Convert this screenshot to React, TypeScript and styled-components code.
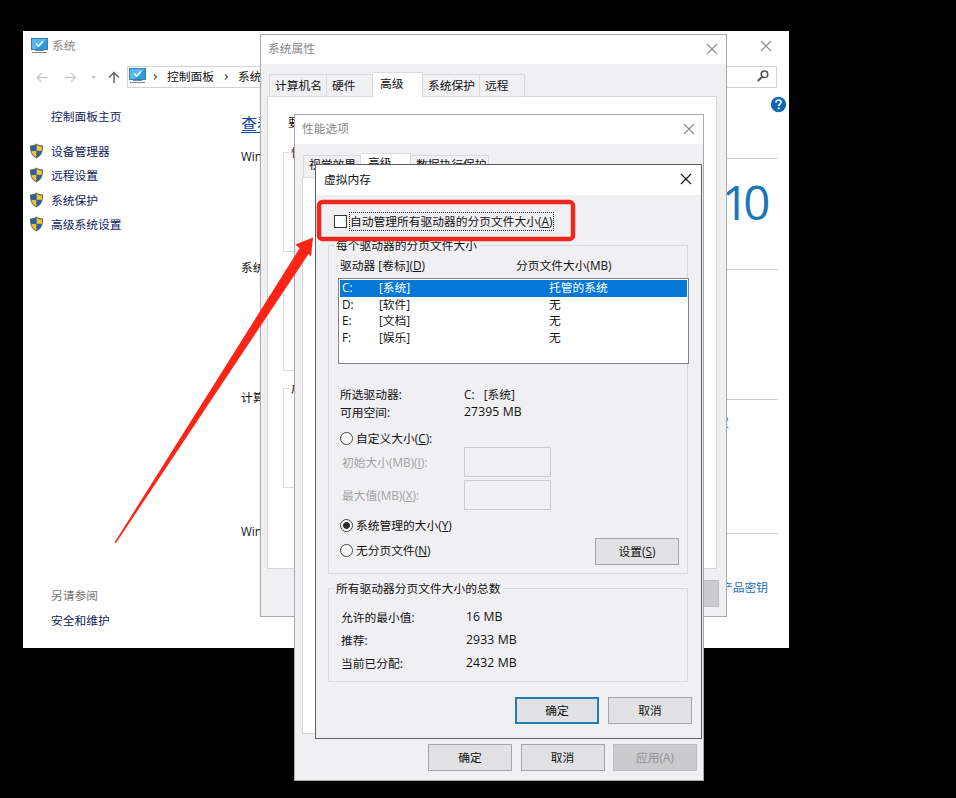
import React from "react";
import styled, { createGlobalStyle, css } from "styled-components";

const GlobalStyle = createGlobalStyle`
  *, *::before, *::after { box-sizing: border-box; }
  body {
    margin: 0;
    background: #000;
    overflow: hidden;
    font-family: "Open Sans", "Noto Sans CJK SC", sans-serif;
    font-size: 11.75px;
    line-height: 16px;
    color: #111;
  }
`;

const Desktop = styled.div`
  position: relative;
  width: 956px;
  height: 798px;
  background: #000;
  overflow: hidden;
  white-space: nowrap;
`;

/* ---------- windows ---------- */

const Window = styled.section<{ $x: number; $y: number; $w: number; $h: number; $border: string; $bg?: string }>`
  position: absolute;
  left: ${(p) => p.$x}px;
  top: ${(p) => p.$y}px;
  width: ${(p) => p.$w}px;
  height: ${(p) => p.$h}px;
  border: 1px solid ${(p) => p.$border};
  background: ${(p) => p.$bg ?? "#f0eff1"};
  display: flex;
  flex-direction: column;
  overflow: hidden;
`;

const TitleBar = styled.header<{ $h: number; $active?: boolean; $end?: number }>`
  flex: none;
  height: ${(p) => p.$h}px;
  padding: 0 ${(p) => p.$end ?? 8}px 2px 7px;
  display: flex;
  align-items: center;
  gap: 4px;
  background: #fff;
  color: ${(p) => (p.$active ? "#111" : "#868686")};
`;

const Title = styled.span<{ $low?: boolean }>`
  flex: 1;
  padding: 0 0 ${(p) => (p.$low ? 0 : 2)}px ${(p) => (p.$low ? 1 : 0)}px;
`;

const CloseIcon = ({ color = "#8a8a8a" }: { color?: string }) => (
  <svg width="12" height="12" viewBox="0 0 12 12" fill="none" stroke={color} strokeWidth="1.1">
    <path d="M1 1l10 10M11 1L1 11" />
  </svg>
);

const MonitorIcon = () => (
  <svg width="17" height="16" viewBox="0 0 17 16">
    <rect x="0.5" y="0.5" width="16" height="11" fill="#2c9be0" stroke="#3b7ea6" />
    <path d="M1 1h15L5 11H1z" fill="#55b8f0" />
    <path d="M5.200 5.600l2.500 2.600 4.400-5" fill="none" stroke="#fff" strokeWidth="1.500" />
    <path d="M4 12.500h9M1 14.500h15" stroke="#6d8797" />
  </svg>
);

const Shield = styled.svg`
  display: block;
`;

const ShieldIcon = () => (
  <Shield width="15" height="16" viewBox="0 0 15 16">
    <path d="M7.500.6C5.600 2 3.300 2.500.9 2.500c0 6 1 10 6.600 12.900 5.600-2.900 6.600-6.900 6.600-12.900-2.400 0-4.700-.5-6.600-1.900z" fill="#6d6a55" />
    <path d="M7.300 2.100C5.600 3.200 3.900 3.600 2 3.700c0 1.500.1 2.800.3 4h5z" fill="#1f62b4" />
    <path d="M7.700 2.100C9.400 3.200 11.100 3.600 13 3.700c0 1.500-.1 2.800-.3 4h-5z" fill="#f3c63e" />
    <path d="M7.300 8.100H2.400c.6 2.900 2 4.700 4.900 6.200z" fill="#f0bd35" />
    <path d="M7.700 8.100h4.900c-.6 2.900-2 4.700-4.900 6.200z" fill="#1f62b4" />
  </Shield>
);

/* ---------- system window ---------- */

const NavBar = styled.nav`
  flex: none;
  height: 22px;
  margin-top: 5px;
  padding: 0 11px 0 12px;
  display: flex;
  align-items: center;
`;

const NavGlyphs = styled.div`
  width: 91px;
  height: 22px;
  flex: none;
`;

const AddressBar = styled.div`
  flex: 1;
  height: 22px;
  border: 1px solid #d3d3d3;
  padding: 0 7px 2px 1px;
  display: flex;
  align-items: center;
`;

const Crumb = styled.span<{ $gap: number }>`
  margin-left: ${(p) => p.$gap}px;
`;

const Chevron = styled.svg<{ $gap: number }>`
  margin: 2px 0 0 ${(p) => p.$gap}px;
`;

const Search = styled.svg`
  margin-left: auto;
`;

const Columns = styled.div`
  flex: 1;
  display: flex;
`;

const Sidebar = styled.aside`
  width: 217px;
  padding: 20px 0 19px 5px;
  display: flex;
  flex-direction: column;
`;

const SideLink = styled.div<{ $gap?: number; $muted?: boolean }>`
  height: 16px;
  margin-top: ${(p) => p.$gap ?? 0}px;
  display: grid;
  grid-template-columns: 22px auto;
  align-items: center;
  color: ${(p) => (p.$muted ? "#777" : "#131b5c")};
  span { grid-column: 2; }
`;

const Spacer = styled.div`
  flex: 1;
`;

const Content = styled.main`
  flex: 1;
  padding: 8px 10px 0 0;
  display: flex;
  flex-direction: column;
`;

const HelpRow = styled.div`
  height: 17px;
  display: flex;
  justify-content: flex-end;
  margin-right: -9px;
`;

const Headline = styled.h1`
  margin: 0 0 13px;
  height: 22px;
  font-size: 16px;
  line-height: 22px;
  font-weight: 400;
  color: #1245a8;
  text-decoration: underline;
  text-underline-offset: 2px;
`;

const InfoSection = styled.section<{ $h: number }>`
  height: ${(p) => p.$h}px;
`;

const InfoHead = styled.h2`
  margin: 0;
  font: inherit;
  display: flex;
  align-items: center;
  gap: 8px;
  &::after {
    content: "";
    flex: 1;
    height: 1px;
    margin-top: 5px;
    background: #cdcdcd;
  }
`;

const VersionMark = styled.div`
  padding-top: 13px;
  padding-right: 13px;
  text-align: right;
  font-family: "Open Sans", sans-serif;
  font-size: 47.500px;
  line-height: 50px;
  letter-spacing: -5.500px;
  color: #1b77ba;
`;

const InfoLink = styled.div<{ $top: number; $right: number }>`
  padding-top: ${(p) => p.$top}px;
  padding-right: ${(p) => p.$right}px;
  text-align: right;
  color: #1a6db8;
`;

/* ---------- dialog parts ---------- */

const Tabs = styled.div<{ $top: number; $left: number }>`
  flex: none;
  height: 25px;
  margin: ${(p) => p.$top}px 0 -1px ${(p) => p.$left}px;
  display: flex;
  align-items: flex-end;
  position: relative;
`;

const Tab = styled.div<{ $w: number; $on?: boolean; $raised?: boolean }>`
  width: ${(p) => p.$w}px;
  height: 23px;
  padding: ${(p) => (p.$raised ? 0 : 2)}px 0 0 5px;
  border: 1px solid #dadadc;
  border-left-width: 0;
  &:first-child { border-left-width: 1px; }
  ${(p) =>
    p.$on &&
    css`
      height: 25px;
      padding-left: 7px;
      background: #fff;
      border-bottom-color: #fff;
    `}
`;

const Panel = styled.div<{ $h: number; $l: number; $r: number }>`
  flex: none;
  height: ${(p) => p.$h}px;
  margin: 0 ${(p) => p.$r}px 0 ${(p) => p.$l}px;
  border: 1px solid #d6d6d8;
  background: #fff;
  padding: 17px 15px 0;
`;

const Group = styled.fieldset<{ $h: number; $mt?: number }>`
  margin: ${(p) => p.$mt ?? 0}px 0 0;
  padding: 0;
  min-width: 0;
  height: ${(p) => p.$h}px;
  border: 1px solid #dadada;
`;

const Legend = styled.legend`
  margin-left: 5px;
  padding: 0 2px;
  height: 16px;
`;

const Note = styled.p`
  margin: 0 0 5px 5px;
`;

const Buttons = styled.div<{ $top: number; $right: number; $gap?: number }>`
  display: flex;
  justify-content: flex-end;
  gap: ${(p) => p.$gap ?? 9}px;
  margin: ${(p) => p.$top}px ${(p) => p.$right}px 0 0;
`;

const Button = styled.button<{ $primary?: boolean }>`
  width: 84px;
  height: 27px;
  padding: 0 0 1px;
  border: ${(p) => (p.$primary ? "2px solid #1c7fb5" : "1px solid #a6a6a8")};
  background: #e2e1e3;
  color: #111;
  font: inherit;
  &:disabled {
    background: #cbcacc;
    border-color: #bdbdbf;
    color: #929294;
  }
`;

/* ---------- virtual memory dialog ---------- */

const VmBody = styled.div`
  padding: 17px 13px 0 12px;
`;

const AutoRow = styled.label`
  display: flex;
  align-items: center;
  height: 19px;
  padding-left: 6px;
  gap: 2px;
`;

const CheckBox = styled.span`
  width: 13px;
  height: 13px;
  border: 1px solid #333;
  background: #fff;
`;

const Focus = styled.span`
  height: 19px;
  padding: 0 1px 0 0;
  border: 1px dotted #222;
`;

const DriveHead = styled.div`
  display: grid;
  grid-template-columns: 176px auto;
  padding-left: 11px;
  margin-top: 4px;
`;

const DriveList = styled.div`
  height: 86px;
  margin: 5px -2px 0 9px;
  border: 1px solid #7f8488;
  background: #fff;
  padding: 1px;
`;

const Drive = styled.div<{ $on?: boolean }>`
  display: grid;
  grid-template-columns: 37px 170px auto;
  height: 16.700px;
  line-height: 15px;
  padding-left: 2px;
  background: ${(p) => (p.$on ? "#0577d4" : "transparent")};
  color: ${(p) => (p.$on ? "#fff" : "#111")};
`;

const Pair = styled.div<{ $h: number; $col?: number; $pad?: number; $off?: boolean }>`
  display: grid;
  grid-template-columns: ${(p) => p.$col ?? 124}px auto;
  align-items: center;
  height: ${(p) => p.$h}px;
  padding-left: ${(p) => p.$pad ?? 11}px;
  color: ${(p) => (p.$off ? "#a3a3a5" : "inherit")};
`;

const Amount = styled.span`
  font-size: 12.200px;
  letter-spacing: 0.12px;
`;

const Field = styled.span`
  width: 87px;
  height: 30px;
  border: 1px solid #cbcbcd;
`;

const RadioRow = styled.label<{ $h: number; $top?: number }>`
  display: flex;
  align-items: center;
  gap: 3px;
  height: ${(p) => p.$h}px;
  padding: ${(p) => p.$top ?? 0}px 0 0 11px;
`;

const Radio = styled.span<{ $on?: boolean }>`
  width: 13px;
  height: 13px;
  border: 1px solid #444;
  border-radius: 50%;
  background: ${(p) => (p.$on ? "radial-gradient(circle, #2a2a2a 3px, #fff 3.800px)" : "#fff")};
`;

const RadioText = styled.span`
  padding-bottom: 1px;
`;

const LastRow = styled.div`
  display: flex;
  justify-content: space-between;
  padding-right: 8px;
`;

const InfoBlock = styled.div`
  padding-top: 21px;
`;

const Totals = styled.div`
  padding-top: 10px;
`;

const Overlay = styled.svg`
  position: absolute;
  left: 0;
  top: 0;
  pointer-events: none;
`;

const drives = [
  ["C:", "[系统]", "托管的系统"],
  ["D:", "[软件]", "无"],
  ["E:", "[文档]", "无"],
  ["F:", "[娱乐]", "无"],
];

const totals = [
  { label: "允许的最小值:", value: "16 MB", h: 22 },
  { label: "推荐:", value: "2933 MB", h: 23 },
  { label: "当前已分配:", value: "2432 MB", h: 24 },
];

const ChevronIcon = ({ gap }: { gap: number }) => (
  <Chevron $gap={gap} width="5" height="8" viewBox="0 0 5 8" fill="none" stroke="#555" strokeWidth="1.200">
    <path d="M1 1.500L3.500 4 1 6.500" />
  </Chevron>
);

const SystemWindow = () => (
  <Window $x={23} $y={31} $w={766} $h={617} $border="#fff" $bg="#fff">
    <TitleBar $h={29} $end={16}>
      <MonitorIcon />
      <Title>系统</Title>
      <CloseIcon />
    </TitleBar>
    <NavBar>
      <NavGlyphs>
        <svg width="91" height="22" viewBox="0 0 91 22" fill="none">
          <path d="M11.500 11.500H1M5.500 7L1 11.500 5.500 16M29 11.500h10.500M35 7l4.500 4.500L35 16" stroke="#cacaca" strokeWidth="1.300" />
          <path d="M55 10h5l-2.500 3z" fill="#c8c8c8" />
          <path d="M78 17V6.500M73 11.500l5-5 5 5" stroke="#666" strokeWidth="1.500" />
        </svg>
      </NavGlyphs>
      <AddressBar>
        <MonitorIcon />
        <ChevronIcon gap={7} />
        <Crumb $gap={9}>控制面板</Crumb>
        <ChevronIcon gap={10} />
        <Crumb $gap={9}>系统</Crumb>
        <Search width="12" height="12" viewBox="0 0 12 12" fill="none" stroke="#555" strokeWidth="1.500">
          <circle cx="7.500" cy="4.300" r="3.300" />
          <path d="M5.200 6.800L.8 11" strokeWidth="1.900" />
        </Search>
      </AddressBar>
    </NavBar>
    <Columns>
      <Sidebar>
        <SideLink><span>控制面板主页</span></SideLink>
        <SideLink $gap={19}><ShieldIcon /><span>设备管理器</span></SideLink>
        <SideLink $gap={8}><ShieldIcon /><span>远程设置</span></SideLink>
        <SideLink $gap={9}><ShieldIcon /><span>系统保护</span></SideLink>
        <SideLink $gap={8}><ShieldIcon /><span>高级系统设置</span></SideLink>
        <Spacer />
        <SideLink $muted><span>另请参阅</span></SideLink>
        <SideLink $gap={9}><span>安全和维护</span></SideLink>
      </Sidebar>
      <Content>
        <HelpRow>
          <svg width="17" height="17" viewBox="0 0 17 17">
            <circle cx="8.500" cy="8.500" r="7.700" fill="#1166b8" />
            <path d="M6 6.500c0-1.700 1.100-2.500 2.500-2.500s2.500.9 2.500 2.200c0 1.900-2.300 1.900-2.300 3.900" fill="none" stroke="#fff" strokeWidth="1.700" />
            <circle cx="8.700" cy="12.400" r="1.100" fill="#fff" />
          </svg>
        </HelpRow>
        <Headline>查看</Headline>
        <InfoSection $h={111}>
          <InfoHead>Windows</InfoHead>
          <VersionMark>10</VersionMark>
        </InfoSection>
        <InfoSection $h={130}>
          <InfoHead>系统</InfoHead>
        </InfoSection>
        <InfoSection $h={134}>
          <InfoHead>计算机</InfoHead>
          <InfoLink $top={9} $right={49}>设置</InfoLink>
        </InfoSection>
        <InfoSection $h={90}>
          <InfoHead>Windows</InfoHead>
          <InfoLink $top={40} $right={10}>产品密钥</InfoLink>
        </InfoSection>
      </Content>
    </Columns>
  </Window>
);

const PropertiesDialog = () => (
  <Window $x={260} $y={34} $w={467} $h={583} $border="#a9a9ab">
    <TitleBar $h={29}>
      <Title>系统属性</Title>
      <CloseIcon />
    </TitleBar>
    <Tabs $top={8} $left={8}>
      <Tab $w={58}>计算机名</Tab>
      <Tab $w={46}>硬件</Tab>
      <Tab $w={50} $on>高级</Tab>
      <Tab $w={57}>系统保护</Tab>
      <Tab $w={45}>远程</Tab>
    </Tabs>
    <Panel $h={473} $l={6} $r={9}>
      <Note>要</Note>
      <Group $h={108} $mt={14}><Legend>性能</Legend></Group>
      <Group $h={109} $mt={10}><Legend>用户</Legend></Group>
      <Group $h={108} $mt={9}><Legend>启动</Legend></Group>
    </Panel>
    <Buttons $top={11} $right={7}>
      <Button disabled />
    </Buttons>
  </Window>
);

const PerformanceDialog = () => (
  <Window $x={294} $y={114} $w={410} $h={667} $border="#a9a9ab">
    <TitleBar $h={29}>
      <Title>性能选项</Title>
      <CloseIcon />
    </TitleBar>
    <Tabs $top={9} $left={8}>
      <Tab $w={58} $raised>视觉效果</Tab>
      <Tab $w={50} $on $raised>高级</Tab>
      <Tab $w={78} $raised>数据执行保护</Tab>
    </Tabs>
    <Panel $h={557} $l={7} $r={6} />
    <Buttons $top={10} $right={6} $gap={8.5}>
      <Button>确定</Button>
      <Button>取消</Button>
      <Button disabled>应用(A)</Button>
    </Buttons>
  </Window>
);

const DriveInfo = () => (
  <InfoBlock>
    <Pair $h={18}><span>所选驱动器:</span><span>C:&nbsp;&nbsp;&nbsp;[系统]</span></Pair>
    <Pair $h={18}><span>可用空间:</span><Amount>27395 MB</Amount></Pair>
    <RadioRow $h={24} $top={11}><Radio /><RadioText>自定义大小(<u>C</u>):</RadioText></RadioRow>
    <Pair $h={33} $col={122} $pad={13} $off><span>初始大小(MB)(<u>I</u>):</span><Field /></Pair>
    <Pair $h={33} $col={122} $pad={13} $off><span>最大值(MB)(<u>X</u>):</span><Field /></Pair>
    <RadioRow $h={27} $top={2}><Radio $on /><RadioText>系统管理的大小(<u>Y</u>)</RadioText></RadioRow>
    <LastRow>
      <RadioRow $h={25}><Radio /><RadioText>无分页文件(<u>N</u>)</RadioText></RadioRow>
      <Button>设置(<u>S</u>)</Button>
    </LastRow>
  </InfoBlock>
);

const VirtualMemoryDialog = () => (
  <Window $x={315} $y={164} $w={387} $h={575} $border="#5e5e60">
    <TitleBar $h={30} $active $end={9}>
      <Title $low>虚拟内存</Title>
      <CloseIcon color="#111" />
    </TitleBar>
    <VmBody>
      <AutoRow>
        <CheckBox />
        <Focus>自动管理所有驱动器的分页文件大小(<u>A</u>)</Focus>
      </AutoRow>
      <Group $h={337} $mt={6}>
        <Legend>每个驱动器的分页文件大小</Legend>
        <DriveHead>
          <span>驱动器 [卷标](<u>D</u>)</span>
          <span>分页文件大小(MB)</span>
        </DriveHead>
        <DriveList>
          {drives.map(([letter, label, size], i) => (
            <Drive key={letter} $on={i === 0}>
              <span>{letter}</span>
              <span>{label}</span>
              <span>{size}</span>
            </Drive>
          ))}
        </DriveList>
        <DriveInfo />
      </Group>
      <Group $h={102} $mt={6}>
        <Legend>所有驱动器分页文件大小的总数</Legend>
        <Totals>
          {totals.map((t) => (
            <Pair key={t.label} $h={t.h} $col={125} $pad={12}>
              <span>{t.label}</span>
              <Amount>{t.value}</Amount>
            </Pair>
          ))}
        </Totals>
      </Group>
    </VmBody>
    <Buttons $top={15} $right={9}>
      <Button $primary>确定</Button>
      <Button>取消</Button>
    </Buttons>
  </Window>
);

export default function App() {
  return (
    <>
      <GlobalStyle />
      <Desktop>
        <SystemWindow />
        <PropertiesDialog />
        <PerformanceDialog />
        <VirtualMemoryDialog />
        <Overlay width="956" height="798" viewBox="0 0 956 798">
          <rect x="319" y="202" width="254" height="37" rx="3.500" fill="none" stroke="#ee2820" strokeWidth="4.500" />
          <path d="M114.500 542.500L299.500 248.500 295.500 244.500 313 237.500 311 256.500 308.500 254 116 543z" fill="#fb2416" />
        </Overlay>
      </Desktop>
    </>
  );
}
